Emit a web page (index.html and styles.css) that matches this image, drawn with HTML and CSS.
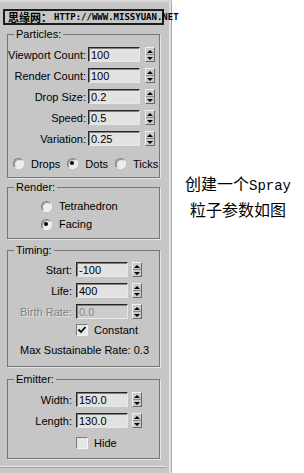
FILE: index.html
```html
<!DOCTYPE html>
<html lang="zh-CN">
<head>
    <meta charset="UTF-8">
    <meta name="viewport" content="width=device-width, initial-scale=1.0">
    <title>Spray Parameters</title>
    <link rel="stylesheet" href="styles.css">
</head>
<body>

    <div class="page">
        <div class="panel">
            <div class="site"><span class="site-name">思缘网：</span><span class="site-url">http://www.missyuan.net</span></div>

            <fieldset class="group particles">
                <legend>Particles:</legend>
                <div class="field">
                    <label for="viewportCount">Viewport Count:</label>
                    <input type="text" id="viewportCount" value="100" readonly>
                    <span class="spinner"><b class="up"></b><b class="down"></b></span>
                </div>
                <div class="field">
                    <label for="renderCount">Render Count:</label>
                    <input type="text" id="renderCount" value="100" readonly>
                    <span class="spinner"><b class="up"></b><b class="down"></b></span>
                </div>
                <div class="field">
                    <label for="dropSize">Drop Size:</label>
                    <input type="text" id="dropSize" value="0.2" readonly>
                    <span class="spinner"><b class="up"></b><b class="down"></b></span>
                </div>
                <div class="field">
                    <label for="speed">Speed:</label>
                    <input type="text" id="speed" value="0.5" readonly>
                    <span class="spinner"><b class="up"></b><b class="down"></b></span>
                </div>
                <div class="field">
                    <label for="variation">Variation:</label>
                    <input type="text" id="variation" value="0.25" readonly>
                    <span class="spinner"><b class="up"></b><b class="down"></b></span>
                </div>
                <div class="options">
                    <span class="option"><i class="radio"></i>Drops</span>
                    <span class="option"><i class="radio checked"></i>Dots</span>
                    <span class="option"><i class="radio"></i>Ticks</span>
                </div>
            </fieldset>

            <fieldset class="group render">
                <legend>Render:</legend>
                <div class="option-row"><i class="radio"></i>Tetrahedron</div>
                <div class="option-row"><i class="radio checked"></i>Facing</div>
            </fieldset>

            <fieldset class="group timing">
                <legend>Timing:</legend>
                <div class="field">
                    <label for="start">Start:</label>
                    <input type="text" id="start" value="-100" readonly>
                    <span class="spinner"><b class="up"></b><b class="down"></b></span>
                </div>
                <div class="field">
                    <label for="life">Life:</label>
                    <input type="text" id="life" value="400" readonly>
                    <span class="spinner"><b class="up"></b><b class="down"></b></span>
                </div>
                <div class="field disabled">
                    <label for="birthRate">Birth Rate:</label>
                    <input type="text" id="birthRate" value="0.0" readonly>
                    <span class="spinner"><b class="up"></b><b class="down"></b></span>
                </div>
                <div class="check-row">
                    <span class="checkbox">
                        <svg width="10" height="10" viewBox="0 0 10 10"><polyline points="1.5,4.5 4,7 8.5,2" fill="none" stroke="#000" stroke-width="1.8"/></svg>
                    </span>Constant
                </div>
                <div class="rate">Max Sustainable Rate: 0.3</div>
            </fieldset>

            <fieldset class="group emitter">
                <legend>Emitter:</legend>
                <div class="field">
                    <label for="width">Width:</label>
                    <input type="text" id="width" value="150.0" readonly>
                    <span class="spinner"><b class="up"></b><b class="down"></b></span>
                </div>
                <div class="field">
                    <label for="length">Length:</label>
                    <input type="text" id="length" value="130.0" readonly>
                    <span class="spinner"><b class="up"></b><b class="down"></b></span>
                </div>
                <div class="check-row hide-row">
                    <span class="checkbox"></span>Hide
                </div>
            </fieldset>

            <div class="rule"></div>
        </div>

        <div class="note">
            <p>创建一个<span class="latin">Spray</span></p>
            <p>粒子参数如图</p>
        </div>
    </div>

</body>
</html>
```

FILE: styles.css
```css
* {
    margin: 0;
    padding: 0;
    box-sizing: border-box;
}

body {
    background: #fff;
    font-family: 'Liberation Sans', Arial, sans-serif;
    font-size: 11px;
    color: #000;
}

.page {
    display: flex;
    height: 473px;
    overflow: hidden;
}

.panel {
    width: 172px;
    flex-shrink: 0;
    background: #c6c6c6;
    border-top: 2px solid #d8d8d8;
    border-right: 1px solid #a8a8a8;
    box-shadow: inset -2px 0 0 #e2e2e2;
    padding-top: 7px;
}

/* site banner */
.site {
    margin-left: 3px;
    width: 161px;
    height: 16px;
    border: 2px solid #1c1c1c;
    display: flex;
    align-items: center;
    white-space: nowrap;
    padding-left: 3px;
}

.site-name {
    font-family: 'Noto Sans CJK SC', sans-serif;
    font-size: 11px;
    font-weight: bold;
    line-height: 12px;
}

.site-url {
    font-family: 'DejaVu Sans Mono', monospace;
    font-size: 9px;
    font-weight: bold;
    text-transform: uppercase;
    margin-left: 2px;
    position: relative;
    z-index: 1;
}

/* group boxes */
.group {
    margin-left: 7px;
    width: 153px;
    border: 1px solid #767676;
    box-shadow: 1px 1px 0 #e6e6e6;
}

.group legend {
    margin-left: 6px;
    padding: 0 2px;
    line-height: 12px;
}

.particles {
    margin-top: 3px;
    padding: 4px 0 3px 0;
}

.render {
    margin-top: 3px;
    padding: 4px 0 5px 0;
}

.timing {
    margin-top: 5px;
    padding: 3px 0 6px 0;
}

.emitter {
    margin-top: 6px;
    padding: 4px 0 6px 0;
}

/* spinner rows */
.field {
    display: grid;
    grid-template-columns: 78px 52px 10px;
    column-gap: 2px;
    align-items: center;
    height: 21px;
}

.field label {
    text-align: right;
    white-space: nowrap;
}

.field .spinner {
    margin-left: 3px;
}

.timing .field,
.emitter .field {
    grid-template-columns: 64px 52px 10px;
    column-gap: 4px;
}

.timing .field .spinner,
.emitter .field .spinner {
    margin-left: 0;
}

.field input {
    width: 52px;
    height: 15px;
    background: #e2e2e2;
    border: 1px solid #e8e8e8;
    border-top-color: #262626;
    border-left-color: #262626;
    box-shadow: inset 1px 1px 0 #808080;
    font-family: 'Liberation Sans', Arial, sans-serif;
    font-size: 11px;
    padding-left: 2px;
    outline: none;
    color: #000;
}

.field.disabled label {
    color: #828282;
    text-shadow: 1px 1px 0 #e4e4e4;
}

.field.disabled input {
    color: #8a8a8a;
    background: #cdcdcd;
}

.spinner {
    display: flex;
    flex-direction: column;
    width: 10px;
    height: 15px;
    border: 1px solid #6a6a6a;
    border-top-color: #f0f0f0;
    border-left-color: #f0f0f0;
    background: #cacaca;
}

.spinner b {
    flex: 1;
    display: flex;
    align-items: center;
    justify-content: center;
}

.spinner b.up {
    border-bottom: 1px solid #8a8a8a;
}

.spinner b.up::before {
    content: '';
    border-left: 3px solid transparent;
    border-right: 3px solid transparent;
    border-bottom: 3px solid #000;
}

.spinner b.down::before {
    content: '';
    border-left: 3px solid transparent;
    border-right: 3px solid transparent;
    border-top: 3px solid #000;
}

/* radio buttons */
.radio {
    display: inline-block;
    width: 11px;
    height: 11px;
    border-radius: 50%;
    background: #ececec;
    border: 1px solid;
    border-color: #7c7c7c #f4f4f4 #f4f4f4 #7c7c7c;
    box-shadow: inset 1px 1px 0 #a0a0a0;
    position: relative;
    flex-shrink: 0;
}

.radio.checked::after {
    content: '';
    position: absolute;
    left: 2px;
    top: 2px;
    width: 4px;
    height: 4px;
    border-radius: 50%;
    background: #000;
}

.options {
    display: flex;
    align-items: center;
    gap: 7px;
    height: 21px;
    margin-top: 4px;
    padding-left: 5px;
}

.option {
    display: flex;
    align-items: center;
    gap: 7px;
}

.option-row {
    display: flex;
    align-items: center;
    gap: 7px;
    height: 18px;
    padding-left: 33px;
}

/* checkboxes */
.check-row {
    display: flex;
    align-items: center;
    gap: 6px;
    height: 16px;
    padding-left: 68px;
}

.hide-row {
    height: 18px;
    margin-top: 3px;
}

.checkbox {
    display: flex;
    align-items: center;
    justify-content: center;
    width: 12px;
    height: 12px;
    background: #e6e6e6;
    border: 1px solid;
    border-color: #7c7c7c #f4f4f4 #f4f4f4 #7c7c7c;
}

.rate {
    margin-top: 3px;
    height: 19px;
    line-height: 19px;
    padding-left: 12px;
}

.rule {
    margin-top: 7px;
    width: 165px;
    border-top: 1px solid #ececec;
    border-bottom: 1px solid #9a9a9a;
}

/* caption */
.note {
    flex: 1;
    text-align: center;
    padding-top: 172px;
    font-family: 'Noto Sans CJK SC', sans-serif;
    font-size: 16px;
    line-height: 23px;
    color: #000;
}

.note .latin {
    font-family: 'Liberation Mono', monospace;
    font-size: 14px;
}
```
